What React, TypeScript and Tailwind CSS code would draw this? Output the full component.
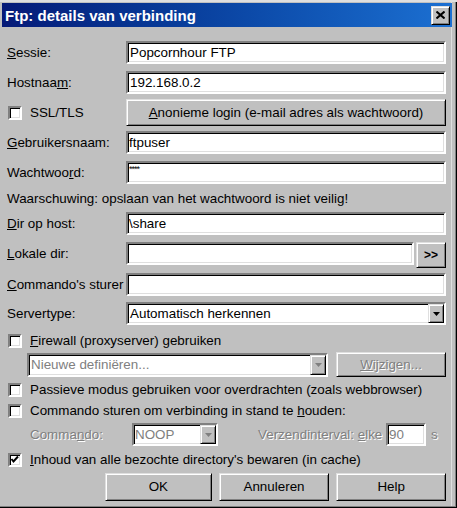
import React from "react";

const sunken =
  "border-2 border-t-[#808080] border-l-[#808080] border-r-white border-b-white shadow-[inset_1px_1px_0_#000,inset_-1px_-1px_0_#dfdfdf]";
const raised =
  "border border-t-[#dfdfdf] border-l-[#dfdfdf] border-r-black border-b-black shadow-[inset_1px_1px_0_#fff,inset_-1px_-1px_0_#808080] bg-[#c0c0c0]";
const disabledText = "text-[#808080] [text-shadow:1px_1px_0_#fff]";

function Check({ checked = false }: { checked?: boolean }) {
  return (
    <div className={`w-[14px] h-[14px] bg-white shrink-0 ${sunken} relative`}>
      {checked && (
        <svg width="10" height="10" viewBox="0 0 10 10" className="absolute left-0 top-0">
          <path d="M1.5 4 L3.5 6.5 L8 1.5" stroke="#000" strokeWidth="2" fill="none" />
        </svg>
      )}
    </div>
  );
}

function Arrow({ disabled = false }: { disabled?: boolean }) {
  return (
    <div className={`w-[16px] h-full ${raised} flex items-center justify-center shrink-0`}>
      <svg width="7" height="4" viewBox="0 0 7 4">
        <path d="M0 0 H7 L3.5 4 Z" fill={disabled ? "#808080" : "#000"} />
      </svg>
    </div>
  );
}

function Label({ children }: { children: React.ReactNode }) {
  return <div className="w-[119px] shrink-0 whitespace-nowrap">{children}</div>;
}

function Input({ value, className = "" }: { value?: string; className?: string }) {
  return (
    <div className={`bg-white h-[23px] ${sunken} flex items-center pl-[1px] whitespace-nowrap ${className}`}>
      {value}
    </div>
  );
}

export default function App() {
  return (
    <div className="relative w-[457px] h-[508px] bg-[#c0c0c0] font-['Liberation_Sans',Arial,sans-serif] text-[13.4px] text-black leading-none overflow-hidden border-t-2 border-t-[#dfdfdf] shadow-[inset_-1px_-1px_0_#000,inset_-2px_-2px_0_#808080,inset_-5px_0_0_#c0c0c0,inset_-6px_0_0_#dfdfdf]">
      {/* Title bar */}
      <div className="ml-[2px] mr-[5px] mt-[1px] h-[24px] bg-gradient-to-r from-[#061a78] to-[#1c70d2] flex items-center justify-between pl-[3px] pr-[2px]">
        <span className="text-white font-bold text-[15px]">Ftp: details van verbinding</span>
        <div className={`w-[19px] h-[19px] ${raised} flex items-center justify-center`}>
          <svg width="9" height="8" viewBox="0 0 9 8">
            <path d="M0.5 0.5 L8.5 7.5 M8.5 0.5 L0.5 7.5" stroke="#000" strokeWidth="2" />
          </svg>
        </div>
      </div>

      <div className="pl-[7px] pr-[11px] flex flex-col">
        {/* Sessie */}
        <div className="mt-[14px] h-[23px] flex items-center">
          <Label><u>S</u>essie:</Label>
          <Input value="Popcornhour FTP" className="w-[320px] pl-[2px]" />
        </div>
        {/* Hostnaam */}
        <div className="mt-[7px] h-[23px] flex items-center">
          <Label>Hostnaa<u>m</u>:</Label>
          <Input value="192.168.0.2" className="w-[320px] pl-[2px]" />
        </div>
        {/* SSL */}
        <div className="mt-[5px] h-[27px] flex items-center">
          <div className="w-[119px] shrink-0 flex items-center pl-[1px]">
            <Check />
            <span className="ml-[8px]">SSL/TLS</span>
          </div>
          <div className={`w-[320px] h-[27px] ${raised} flex items-center justify-center`}>
            <span><u>A</u>nonieme login (e-mail adres als wachtwoord)</span>
          </div>
        </div>
        {/* Gebruikersnaam */}
        <div className="mt-[5px] h-[23px] flex items-center">
          <Label><u>G</u>ebruikersnaam:</Label>
          <Input value="ftpuser" className="w-[320px]" />
        </div>
        {/* Wachtwoord */}
        <div className="mt-[7px] h-[23px] flex items-center">
          <Label>Wachtwoo<u>r</u>d:</Label>
          <div className={`bg-white w-[320px] h-[23px] ${sunken} pl-[1px] pt-[2px] text-[9px] leading-none tracking-[-1px]`}>
            ****
          </div>
        </div>
        {/* Warning */}
        <div className="mt-[6px] h-[18px] flex items-center whitespace-nowrap">
          Waarschuwing: opslaan van het wachtwoord is niet veilig!
        </div>
        {/* Dir op host */}
        <div className="mt-[4px] h-[23px] flex items-center">
          <Label><u>D</u>ir op host:</Label>
          <Input value="\share" className="w-[320px]" />
        </div>
        {/* Lokale dir */}
        <div className="mt-[7px] h-[26px] flex items-start">
          <Label><div className="h-[23px] flex items-center"><span><u>L</u>okale dir:</span></div></Label>
          <Input className="w-[289px]" />
          <div className={`ml-[2px] w-[30px] h-[26px] ${raised} flex items-center justify-center font-bold text-[12px]`}>
            &gt;&gt;
          </div>
        </div>
        {/* Commando's sturer */}
        <div className="mt-[5px] h-[23px] flex items-center">
          <Label><u>C</u>ommando's sturer</Label>
          <Input className="w-[320px]" />
        </div>
        {/* Servertype */}
        <div className="mt-[6px] h-[23px] flex items-center">
          <Label>Servertype:</Label>
          <div className={`bg-white w-[320px] h-[23px] ${sunken} flex items-center justify-between pl-[2px]`}>
            <span>Automatisch herkennen</span>
            <div className="h-[19px] flex"><Arrow /></div>
          </div>
        </div>
        {/* Firewall */}
        <div className="mt-[7px] h-[18px] flex items-center pl-[1px]">
          <Check />
          <span className="ml-[8px]"><u>F</u>irewall (proxyserver) gebruiken</span>
        </div>
        {/* Firewall combo */}
        <div className="mt-[2px] h-[25px] flex items-center">
          <div className={`ml-[20px] bg-white w-[304px] h-[24px] ${sunken} flex items-center justify-between pl-[2px]`}>
            <span className={disabledText}>Nieuwe definiëren...</span>
            <div className="h-[20px] flex"><Arrow disabled /></div>
          </div>
          <div className={`ml-[8px] w-[111px] h-[25px] ${raised} flex items-center justify-center`}>
            <span className={disabledText}><u>W</u>ijzigen...</span>
          </div>
        </div>
        {/* Passieve */}
        <div className="mt-[4px] h-[18px] flex items-center pl-[1px]">
          <Check />
          <span className="ml-[8px] whitespace-nowrap">Passieve modus gebruiken voor overdrachten (zoals webbrowser)</span>
        </div>
        {/* Commando sturen */}
        <div className="mt-[3px] h-[18px] flex items-center pl-[1px]">
          <Check />
          <span className="ml-[8px] whitespace-nowrap">Commando sturen om verbinding in stand te <u>h</u>ouden:</span>
        </div>
        {/* NOOP row */}
        <div className="mt-[3px] h-[23px] flex items-center">
          <span className={`ml-[23px] w-[102px] ${disabledText}`}>Comma<u>n</u>do:</span>
          <div className={`bg-white w-[86px] h-[23px] ${sunken} flex items-center justify-between pl-[1px]`}>
            <span className={disabledText}>NOOP</span>
            <div className="h-[19px] flex"><Arrow disabled /></div>
          </div>
          <span className={`ml-[40px] w-[128px] whitespace-nowrap ${disabledText}`}>Verzendinterval: <u>e</u>lke</span>
          <div className={`bg-white w-[40px] h-[23px] ${sunken} flex items-center pl-[1px]`}>
            <span className={disabledText}>90</span>
          </div>
          <span className={`ml-[5px] ${disabledText}`}>s</span>
        </div>
        {/* Inhoud */}
        <div className="mt-[5px] h-[18px] flex items-center pl-[1px]">
          <Check checked />
          <span className="ml-[8px] whitespace-nowrap"><u>I</u>nhoud van alle bezochte directory's bewaren (in cache)</span>
        </div>
        {/* Buttons */}
        <div className="mt-[4px] h-[28px] flex items-center">
          <div className={`ml-[98px] w-[108px] h-[28px] ${raised} flex items-center justify-center`}>OK</div>
          <div className={`ml-[7px] w-[112px] h-[28px] ${raised} flex items-center justify-center`}>Annuleren</div>
          <div className={`ml-[7px] w-[111px] h-[28px] ${raised} flex items-center justify-center`}>Help</div>
        </div>
      </div>
    </div>
  );
}
